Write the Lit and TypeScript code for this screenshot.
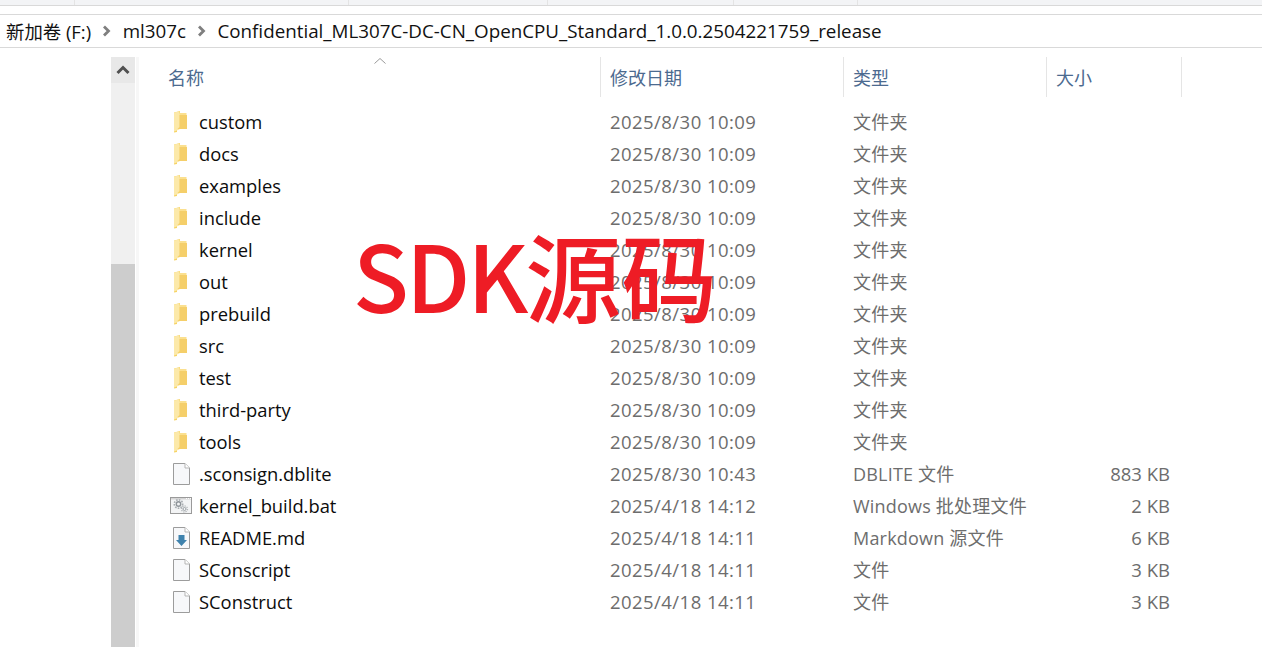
import { LitElement, html, css, svg } from "lit";
import { customElement } from "lit/decorators.js";

type Row = { n: string; d: string; t: string; s?: string; i: "folder" | "file" | "bat" | "md" };
const d1 = "2025/8/30 10:09";
const d2 = "2025/4/18 14:11";
const rows: Row[] = [
  ...["custom", "docs", "examples", "include", "kernel", "out", "prebuild", "src", "test", "third-party", "tools"].map(
    (n) => ({ n, d: d1, t: "文件夹", i: "folder" as const })
  ),
  { n: ".sconsign.dblite", d: "2025/8/30 10:43", t: "DBLITE 文件", s: "883 KB", i: "file" },
  { n: "kernel_build.bat", d: "2025/4/18 14:12", t: "Windows 批处理文件", s: "2 KB", i: "bat" },
  { n: "README.md", d: d2, t: "Markdown 源文件", s: "6 KB", i: "md" },
  { n: "SConscript", d: d2, t: "文件", s: "3 KB", i: "file" },
  { n: "SConstruct", d: d2, t: "文件", s: "3 KB", i: "file" },
];

const page = svg`<path d="M3.5 1.5H15L19.5 6V22.5H3.5Z" fill="#f7f8fa" stroke="#9c9c9c"/><path d="M15 1.5V6H19.5" fill="#fff" stroke="#b5b5b5"/>`;
const icons = {
  folder: svg`<path d="M4 2.5L10 1V5H17V19H7V22L4 22.5Z" fill="#f6d365"/><path d="M10 3H16.5V18.5H7V6Z" fill="#fbe08f"/><path d="M4 2.5L9.5 1.5V19.5L4 21.5Z" fill="#fce9a9"/><path d="M9.5 5H17V19H7.5L9.5 17Z" fill="#f5cf6a"/>`,
  file: page,
  bat: svg`<rect x="0.5" y="3.5" width="21" height="16" fill="#f3f4f5" stroke="#9a9a9a"/><path d="M1 4H21V5.5H1Z" fill="#d5d5d5"/><path d="M16 4.5H17M18 4.5H19M20 4.5H21" stroke="#fff"/><circle cx="8.5" cy="10" r="4.2" fill="none" stroke="#a8adb1" stroke-width="1.6" stroke-dasharray="1.6 1.2"/><circle cx="8.5" cy="10" r="2.2" fill="none" stroke="#8f959a" stroke-width="1.4"/><circle cx="14.5" cy="15" r="3" fill="none" stroke="#b4b8bb" stroke-width="1.3" stroke-dasharray="1.3 1"/><circle cx="14.5" cy="15" r="1.5" fill="none" stroke="#9aa0a5"/>`,
  md: svg`${page}<path d="M8.5 9H14.5V14H17L11.5 20L6 14H8.5Z" fill="#3f82ad"/>`,
};

@customElement("app-root")
export class AppRoot extends LitElement {
  static styles = css`
    :host {
      display: block;
      position: relative;
      width: 1262px;
      height: 647px;
      overflow: hidden;
      background: #fff;
      font-family: "Open Sans", "Noto Sans CJK SC", sans-serif;
      font-size: 18px;
    }
    .strip {
      height: 5px;
      background: #f3f4f6;
      border-bottom: 1px solid #d9d9d9;
      display: flex;
    }
    .strip i {
      width: 1px;
      height: 5px;
      background: #e4e4e4;
    }
    .s1 { margin-left: 74px; }
    .s2 { margin-left: 273px; }
    .s3 { margin-left: 198px; }
    .s4 { margin-left: 185px; }
    .s5 { margin-left: 123px; }
    .crumb {
      margin-top: 8px;
      height: 32px;
      border-top: 1px solid #d9d9d9;
      border-bottom: 1px solid #d9d9d9;
      display: flex;
      align-items: center;
      padding-left: 6px;
      color: #111;
      font-size: 18.8px;
    }
    .crumb svg { margin: 0 10.5px 0 11px; flex: none; }
    .drive { font-size: 18.4px; }
    .main {
      display: flex;
      height: 600px;
    }
    .scroll {
      margin-left: 111px;
      width: 24px;
      background: #f0f0f0;
      display: flex;
      flex-direction: column;
      margin-top: 9px;
      box-sizing: border-box;
      height: 590px;
      flex: none;
    }
    .up {
      height: 26px;
      background: #e8e8e8;
      display: flex;
      align-items: center;
      justify-content: center;
    }
    .thumb {
      margin-top: 181px;
      flex: 1;
      background: #cdcdcd;
    }
    .gutter {
      width: 3px;
      margin-left: 1px;
      margin-top: 9px;
      background: #f7f7f7;
      flex: none;
    }
    .list {
      flex: 1;
      position: relative;
      min-width: 0;
    }
    .head, .row {
      display: grid;
      grid-template-columns: 463px 243px 203px 135px;
      margin-left: -1px;
    }
    .head {
      margin-top: 9px;
      height: 40px;
      color: #4c6a8f;
      position: relative;
    }
    .head > div {
      border-right: 1px solid #e5e5e5;
      display: flex;
      align-items: center;
      padding-left: 9px;
      height: 40px;
      box-sizing: border-box;
    }
    .head > .name { padding-left: 30px; }
    .sort {
      position: absolute;
      left: 235px;
      top: 0;
    }
    .rows { margin-top: 9px; }
    .row {
      height: 32px;
      align-items: center;
      line-height: 32px;
      color: #6d6d6d;
    }
    .row > div { padding-left: 9px; white-space: nowrap; }
    .row > .name {
      display: flex;
      align-items: center;
      gap: 7px;
      padding-left: 32px;
      color: #0c0c0c;
      font-size: 18.35px;
    }
    .row > .date { font-size: 18.5px; letter-spacing: 0.45px; }
    .row > .type { letter-spacing: 0.2px; }
    .row > .size {
      padding-left: 0;
      padding-right: 12px;
      text-align: right;
      font-size: 18.5px;
    }
    .name svg { flex: none; }
    .banner {
      position: absolute;
      left: 353px;
      top: 217px;
      color: #ee1c25;
      font-family: "Noto Sans CJK SC", sans-serif;
      font-size: 92px;
      font-weight: 500;
      letter-spacing: -3px;
      line-height: 110px;
      white-space: nowrap;
    }
    .banner b {
      position: relative;
      top: 2px;
      font-size: 96px;
      font-weight: 500;
      letter-spacing: 0;
    }
  `;

  private chevron() {
    return html`<svg width="10" height="12" viewBox="0 0 10 12"><path d="M2 1.5L6.5 6L2 10.5" fill="none" stroke="#7f7f7f" stroke-width="2.8"/></svg>`;
  }

  render() {
    return html`
      <div class="strip"><i class="s1"></i><i class="s2"></i><i class="s3"></i><i class="s4"></i><i class="s5"></i></div>
      <div class="crumb">
        <span class="drive">新加卷 (F:)</span>${this.chevron()}<span>ml307c</span>${this.chevron()}<span>Confidential_ML307C-DC-CN_OpenCPU_Standard_1.0.0.2504221759_release</span>
      </div>
      <div class="main">
        <div class="scroll">
          <div class="up"><svg width="14" height="10" viewBox="0 0 14 10"><path d="M1.5 8L7 2.5L12.5 8" fill="none" stroke="#505050" stroke-width="3"/></svg></div>
          <div class="thumb"></div>
        </div>
        <div class="gutter"></div>
        <div class="list">
          <div class="head">
            <div class="name">名称</div><div>修改日期</div><div>类型</div><div>大小</div>
            <svg class="sort" width="14" height="8" viewBox="0 0 14 8"><path d="M1.5 6.5L7 1.5L12.5 6.5" fill="none" stroke="#9a9a9a"/></svg>
          </div>
          <div class="rows">
            ${rows.map(
              (r) => html`<div class="row">
                <div class="name"><svg width="22" height="24" viewBox="0 0 22 24">${icons[r.i]}</svg><span>${r.n}</span></div>
                <div class="date">${r.d}</div>
                <div class="type">${r.t}</div>
                <div class="size">${r.s ?? ""}</div>
              </div>`
            )}
          </div>
        </div>
      </div>
      <div class="banner">SDK<b>源码</b></div>
    `;
  }
}
